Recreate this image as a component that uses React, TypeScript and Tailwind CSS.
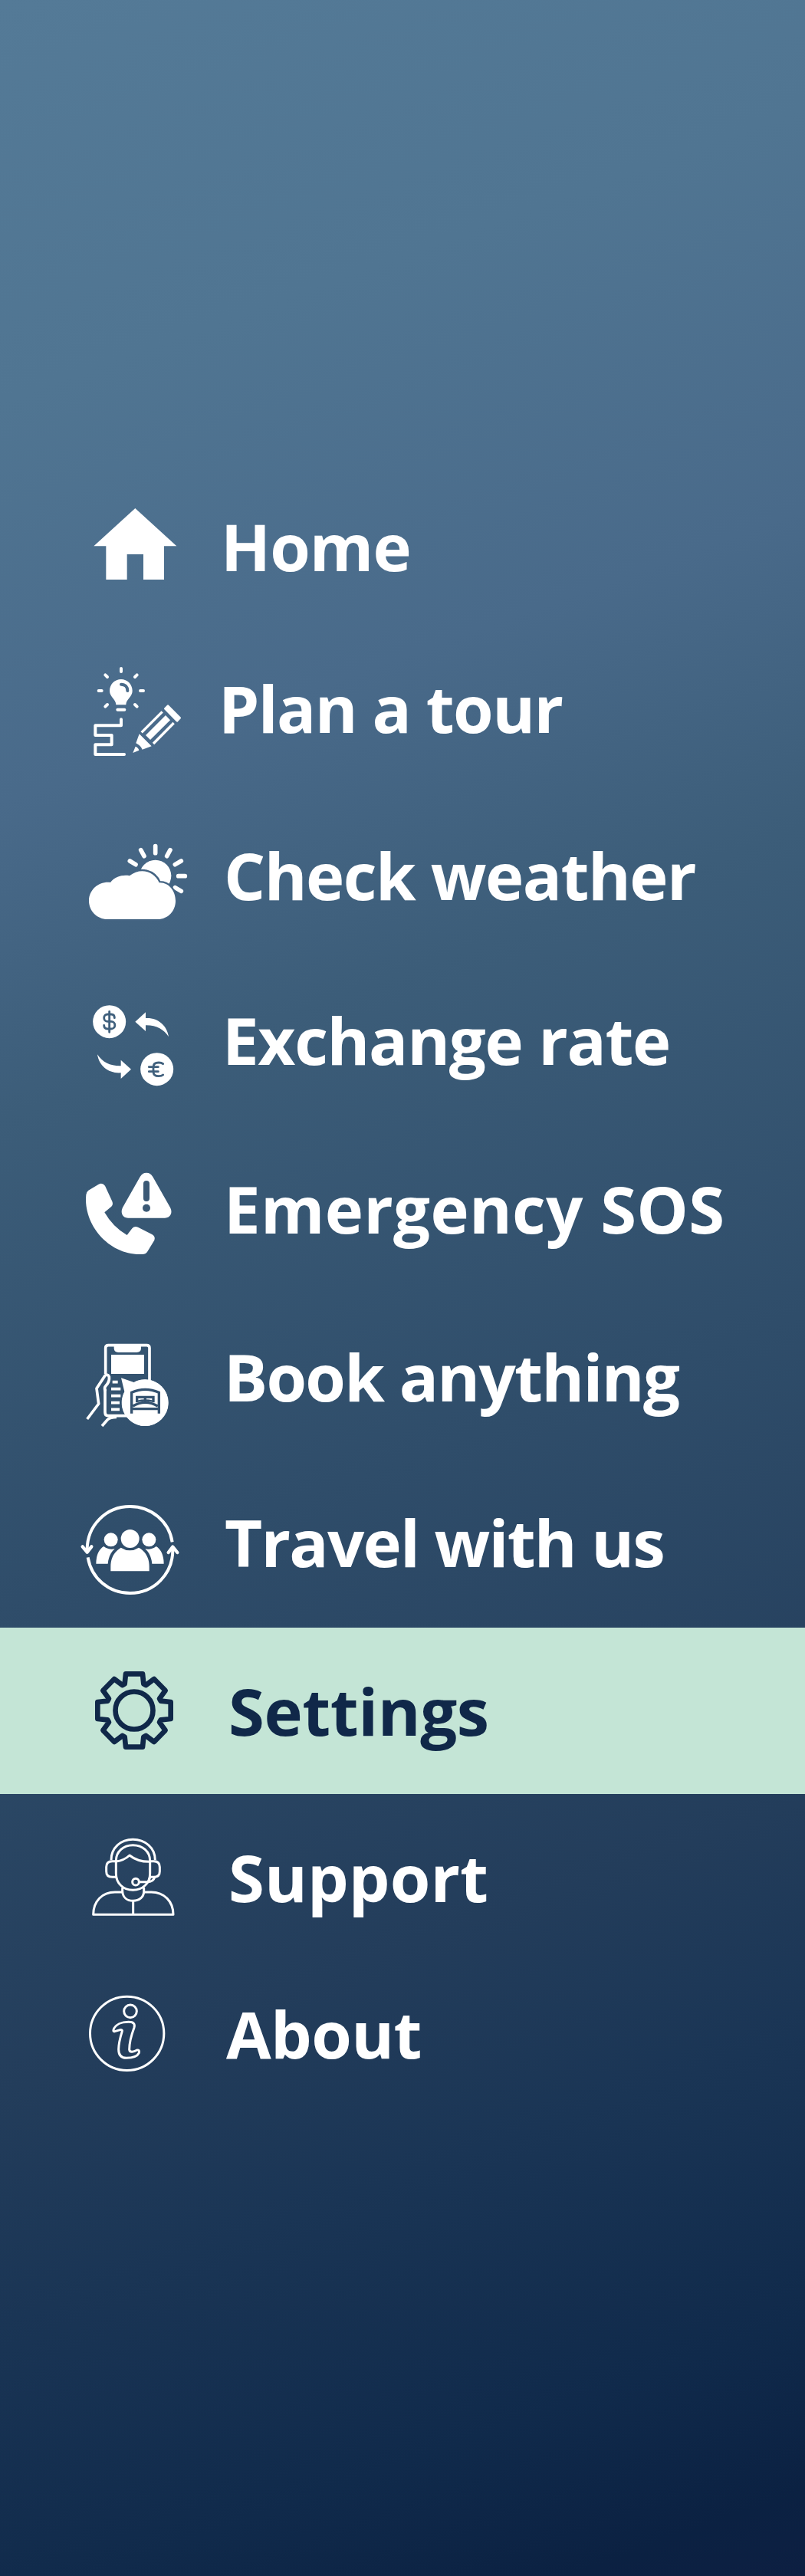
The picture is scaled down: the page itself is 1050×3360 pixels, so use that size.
import type { ReactNode } from 'react';

const Home = () => (
  <path fill="currentColor" d="M259 69 421 217H372V348H291V249H227V348H145V217H97Z" />
);

const Plan = () => (
  <g fill="none" stroke="currentColor" strokeLinecap="round">
    <path
      strokeWidth="12"
      d="M174 66V78M112 91 120 99M236 91 228 99M86 153H98M249 153H261M112 215 120 207M236 215 228 207"
    />
    <path
      fill="currentColor"
      stroke="none"
      d="M174 108C149 108 129 128 129 153C129 178 154 186 154 208H193C193 186 218 178 218 153C218 128 198 108 174 108Z"
    />
    <path stroke="#4a6b8a" strokeWidth="12" d="M174 128C190 128 199 138 199 153" />
    <path strokeWidth="12" d="M160 227H187" />
    <path strokeWidth="12" strokeLinejoin="round" d="M174 265V289H73V327H137V364H73V402H186" />
    <path
      fill="currentColor"
      stroke="currentColor"
      strokeWidth="8"
      strokeLinejoin="round"
      d="M357 212 404 259 393 271 346 223Z"
    />
    <path fill="currentColor" stroke="none" d="M348 249 366 268 288 345 270 327Z" />
    <path strokeWidth="10" strokeLinecap="butt" d="M335 235 254 316M380 279 300 360" />
    <path fill="currentColor" stroke="none" d="M245 322 293 370 257 383Q250 367 232 358Z" />
    <path fill="currentColor" stroke="none" d="M230 371Q241 375 244 386L220 396Z" />
  </g>
);

const Weather = () => (
  <>
    <g fill="none" stroke="currentColor" strokeWidth="17" strokeLinecap="round">
      <path d="M308 71V98M251 86 264 110M366 86 353 110M208 129 231 143M409 129 385 143M398 188H424M385 233 409 247" />
    </g>
    <circle cx="308" cy="187" r="62" fill="currentColor" />
    <path
      fill="currentColor"
      stroke="#446483"
      strokeWidth="14"
      paintOrder="stroke"
      d="M120 357C80 357 48 325 48 285C48 240 88 208 132 213C150 190 180 182 207 187C248 153 304 168 323 214C361 212 387 247 387 285C387 325 357 357 318 357Z"
    />
  </>
);

const Exchange = () => (
  <>
    <g fill="currentColor">
      <circle cx="128" cy="128" r="64.500" />
      <circle cx="314" cy="314" r="64.500" />
      <path d="M229 128 270 91V114C318 111 354 143 360 187C342 158 311 141 270 142V165Z" />
      <path d="M213 314 173 278V301C132 302 101 287 81 256C88 302 124 331 173 328V351Z" />
    </g>
    <g fill="none" stroke="#40607d" strokeWidth="8.500" strokeLinecap="round">
      <path d="M148 113C148 103 143 99 135 99H121A14 14 0 0 0 121 127H135A14.500 14.500 0 0 1 135 156H121C112 156 107 151 107 142M128 88V169" />
      <path d="M338 293Q332 288 321 288C305 288 300 297 300 305V323C300 334 306 341 321 341Q332 341 338 336M283 305H319M283 323H319" />
    </g>
  </>
);

const Emergency = () => (
  <>
    <path
      fill="currentColor"
      d="M46 128 86 104Q101 97 111 110L139 171Q144 184 136 191L109 214Q142 272 197 303L217 277Q226 266 240 272L296 301Q309 309 304 323L276 369Q270 378 257 378C130 385 25 265 37 145Q38 134 46 128Z"
    />
    <path
      fill="currentColor"
      d="M248 75Q257 59 273 59Q289 59 298 75L366 195C377 215 367 236 345 236H201C179 236 170 214 180 195Z"
    />
    <path stroke="#3b5975" strokeWidth="24" strokeLinecap="round" d="M273 102V159" />
    <circle cx="273" cy="197" r="15" fill="#3b5975" />
  </>
);

const Book = () => (
  <g fill="none" stroke="currentColor" strokeWidth="11">
    <path d="M113 172V70Q113 59 124 59H274Q285 59 285 70V210M111 230V322Q111 335 123 335H205" />
    <path fill="currentColor" stroke="none" d="M146 60H252V70Q252 87 235 87H163Q146 87 146 70Z" />
    <path fill="currentColor" stroke="none" d="M135 96H264V171H135Z" />
    <path d="M41 348 86 288 78 228 110 179Q121 169 127 182Q130 201 113 219Q107 225 112 239" strokeLinejoin="round" />
    <path d="M99 375 122 349Q131 341 156 340" />
    <path strokeWidth="11" d="M140 203H161M135 230H172M135 257H172M135 284H168M135 310H168" />
    <path fill="currentColor" stroke="none" d="M174 187 224 204A91 91 0 1 1 187 241Z" />
    <circle cx="268" cy="284" r="91" fill="currentColor" stroke="none" />
    <g stroke="#345270" strokeWidth="10">
      <path d="M215 326V244Q268 220 322 244V326M215 308H322M220 297Q268 269 317 297" />
      <path d="M236 283V262H300V283M268 262V280" />
      <path d="M239 278Q268 271 297 278" strokeWidth="7" />
    </g>
  </g>
);

const Travel = () => (
  <>
    <g fill="none" stroke="currentColor" strokeWidth="12">
      <path d="M389 184C377 105 308 45 224 45C130 45 56 119 56 214V222M59 244C72 325 140 384 224 384C318 384 391 309 391 215V205" />
      <path strokeLinecap="round" strokeLinejoin="round" strokeWidth="13" d="M38 202 56 224 73 202M374 225 391 203 409 225" />
    </g>
    <g fill="currentColor">
      <circle cx="149" cy="175" r="27" />
      <circle cx="298" cy="175" r="27" />
      <circle cx="224" cy="171" r="36" />
      <path d="M148 298V280C148 246 163 221 188 206Q223 228 258 206C284 220 299 246 299 280V298Z" />
      <path d="M91 269C91 238 101 213 121 201Q141 216 164 211C148 225 139 245 137 269ZM356 269C356 238 346 213 326 201Q306 216 283 211C299 225 308 245 310 269Z" />
    </g>
  </>
);

const Gear = () => (
  <g transform="translate(225 213)" fill="none" stroke="currentColor" strokeWidth="20" strokeLinejoin="round">
    <circle r="73.500" />
    <path d="M-33-143H33L37-104 46-99 78-123 122-78 99-46 104-37 143-33V33L104 37 99 46 122 78 78 123 46 99 37 104 33 143H-33L-37 104-46 99-78 123-122 78-99 46-104 37-143 33V-33L-104-37-99-46-122-78-78-123-46-99-37-104Z" />
  </g>
);

const Support = () => (
  <g fill="none" stroke="currentColor" strokeWidth="9" strokeLinejoin="round">
    <path d="M135 124C135 75 173 43 220 43C267 43 307 75 307 124" />
    <path d="M154 126C154 90 183 65 220 65C258 65 287 90 287 126V176C287 214 258 241 220 241C182 241 154 214 154 176Z" />
    <path d="M154 129Q184 126 207 105Q239 131 287 130" />
    <path d="M154 128H139Q116 128 116 151V168Q116 190 139 190H154M287 128H302Q325 128 325 151V168Q325 190 302 190H287" />
    <circle cx="231" cy="209" r="13" />
    <path d="M245 209H280Q299 209 306 190M287 190 282 207" />
    <path d="M179 232V246C181 270 197 283 221 283C245 283 263 268 263 246V231M221 283V337" />
    <path d="M180 249H150C99 249 65 285 65 337H378C378 285 342 249 292 249H263" />
  </g>
);

const About = () => (
  <g fill="none" stroke="currentColor" strokeWidth="9" strokeLinejoin="round">
    <circle cx="197" cy="187" r="144.500" />
    <circle cx="210" cy="100" r="25" />
    <path d="M144 173C151 151 177 142 203 142C223 142 229 150 225 164C214 193 206 221 206 250C207 263 223 259 236 252Q247 250 244 263C237 278 213 283 194 283C172 283 164 269 164 249C164 224 170 204 178 178Q180 172 170 173L149 179Q142 180 144 173Z" />
  </g>
);

type Item = { label: string; icon: ReactNode; row: string; iconPos: string; text: string };

const items: Item[] = [
  { label: 'Home', icon: <Home />, row: 'h-[211px]', iconPos: 'ml-[90px] mt-9', text: 'ml-[38px] tracking-[-0.9px]' },
  { label: 'Plan a tour', icon: <Plan />, row: 'h-[218px]', iconPos: 'ml-[100px] mt-[35px]', text: 'ml-[25px] tracking-[-1.6px]' },
  { label: 'Check weather', icon: <Weather />, row: 'h-[215px]', iconPos: 'ml-[100px] mt-[47px]', text: 'ml-[32px] tracking-[-1.5px]' },
  { label: 'Exchange rate', icon: <Exchange />, row: 'h-[220px]', iconPos: 'ml-[100px] mt-[42px]', text: 'ml-[30px] tracking-[-1.3px]' },
  { label: 'Emergency SOS', icon: <Emergency />, row: 'h-[219px]', iconPos: 'ml-[100px] mt-[42px]', text: 'ml-[32px] tracking-[0.3px]' },
  { label: 'Book anything', icon: <Book />, row: 'h-[216px]', iconPos: 'ml-[100px] mt-[48px]', text: 'ml-[32px] tracking-[-1.7px]' },
  { label: 'Travel with us', icon: <Travel />, row: 'h-[220px]', iconPos: 'ml-[95px] mt-[47px]', text: 'ml-[38px] tracking-[-1.75px]' },
  { label: 'Settings', icon: <Gear />, row: 'h-[217px] bg-[#c4e5d6] text-[#102849]', iconPos: 'ml-[100px] mt-[37px]', text: 'ml-[38px] tracking-[-0.4px]' },
  { label: 'Support', icon: <Support />, row: 'h-[204px]', iconPos: 'ml-[100px] mt-[45px]', text: 'ml-[38px] tracking-[0.1px]' },
  { label: 'About', icon: <About />, row: 'h-[217px]', iconPos: 'ml-[100px] mt-[46px]', text: 'ml-[35px] tracking-[-0.6px]' },
];

export default function App() {
  return (
    <nav className="h-[3360px] w-[1050px] overflow-hidden bg-[linear-gradient(160deg,#547a97_0%,#507592_14%,#496a8a_28%,#3c5d79_39%,#2f4d6a_56%,#233d5b_73%,#1a3555_81%,#102a4b_91%,#0b2142_97%,#0d1f42_100%)] pt-[604px] font-['Open_Sans',sans-serif] text-white">
      {items.map((item) => (
        <a key={item.label} className={`flex items-start ${item.row}`}>
          <svg viewBox="0 0 480 450" className={`h-[150px] w-[160px] shrink-0 ${item.iconPos}`} aria-hidden="true">
            {item.icon}
          </svg>
          <span className={`mt-[65.500px] text-[85px] leading-none font-bold whitespace-nowrap ${item.text}`}>
            {item.label}
          </span>
        </a>
      ))}
    </nav>
  );
}
